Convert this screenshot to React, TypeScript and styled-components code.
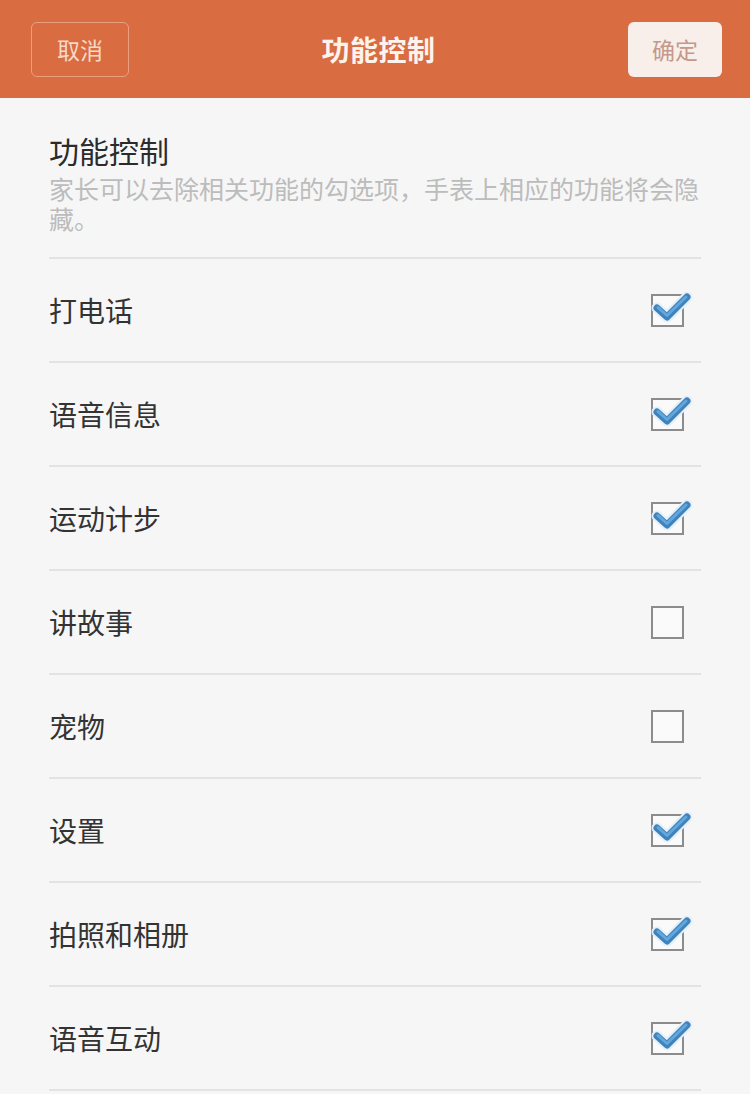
import React from "react";
import styled, { createGlobalStyle } from "styled-components";

const GlobalStyle = createGlobalStyle`
  html, body {
    margin: 0;
    padding: 0;
    background: #f6f6f6;
    font-family: "Noto Sans CJK SC", "Noto Sans", sans-serif;
  }
  * { box-sizing: border-box; }
`;

const items = [
  { label: "打电话", checked: true },
  { label: "语音信息", checked: true },
  { label: "运动计步", checked: true },
  { label: "讲故事", checked: false },
  { label: "宠物", checked: false },
  { label: "设置", checked: true },
  { label: "拍照和相册", checked: true },
  { label: "语音互动", checked: true },
];

const CheckBox = ({ checked }: { checked: boolean }) => (
  <CheckWrap>
    <svg width="33" height="33" viewBox="0 0 33 33" overflow="visible">
      <rect x="1" y="1" width="31" height="31" fill="#fafafa" stroke="#8c8c8c" strokeWidth="2" />
      {checked && (
        <g fill="none" strokeLinecap="round" strokeLinejoin="round">
          <polyline points="6,14 16,23 36,3" stroke="#e4eff9" strokeWidth="11" />
          <polyline points="6,14 16,23 36,3" stroke="#3f83bd" strokeWidth="7" />
          <polyline points="7,13.5 16,21.5 35,3" stroke="#62a6dc" strokeWidth="3" />
        </g>
      )}
    </svg>
  </CheckWrap>
);

export default function App() {
  return (
    <Page>
      <GlobalStyle />
      <Header>
        <CancelButton>取消</CancelButton>
        <HeaderTitle>功能控制</HeaderTitle>
        <ConfirmButton>确定</ConfirmButton>
      </Header>
      <Content>
        <Intro>
          <Title>功能控制</Title>
          <Subtitle>家长可以去除相关功能的勾选项，手表上相应的功能将会隐藏。</Subtitle>
        </Intro>
        <List>
          {items.map((item) => (
            <Row key={item.label}>
              <RowLabel>{item.label}</RowLabel>
              <CheckBox checked={item.checked} />
            </Row>
          ))}
        </List>
      </Content>
    </Page>
  );
}

const Page = styled.div`
  min-height: 1094px;
  background: #f6f6f6;
`;

const Header = styled.header`
  height: 98px;
  background: #d96c41;
  display: flex;
  align-items: center;
  justify-content: space-between;
  padding: 0 28px 0 31px;
`;

const CancelButton = styled.div`
  width: 98px;
  height: 55px;
  border: 1px solid rgba(255, 225, 205, 0.45);
  border-radius: 6px;
  display: flex;
  align-items: center;
  justify-content: center;
  color: #f6d9c8;
  font-size: 23px;
`;

const ConfirmButton = styled.div`
  width: 94px;
  height: 55px;
  background: #f8efeb;
  border-radius: 6px;
  display: flex;
  align-items: center;
  justify-content: center;
  color: #c4988a;
  font-size: 23px;
`;

const HeaderTitle = styled.h1`
  margin: 0;
  color: #fdf3ec;
  font-size: 28px;
  font-weight: 700;
  letter-spacing: 0.5px;
`;

const Content = styled.main`
  padding: 0 49px;
`;

const Intro = styled.section`
  padding: 33px 0 24px;
`;

const Title = styled.h2`
  margin: 0;
  font-size: 30px;
  line-height: 38px;
  font-weight: 400;
  color: #2b2b2b;
`;

const Subtitle = styled.p`
  margin: 4px 0 0;
  font-size: 25px;
  line-height: 30px;
  color: #bcbcbc;
`;

const List = styled.div`
  border-bottom: 2px solid #e3e3e3;
`;

const Row = styled.div`
  height: 104px;
  border-top: 2px solid #e3e3e3;
  display: flex;
  align-items: center;
  justify-content: space-between;
  padding-right: 17px;
`;

const RowLabel = styled.span`
  font-size: 28px;
  color: #333333;
`;

const CheckWrap = styled.div`
  width: 33px;
  height: 33px;
  display: flex;
`;
